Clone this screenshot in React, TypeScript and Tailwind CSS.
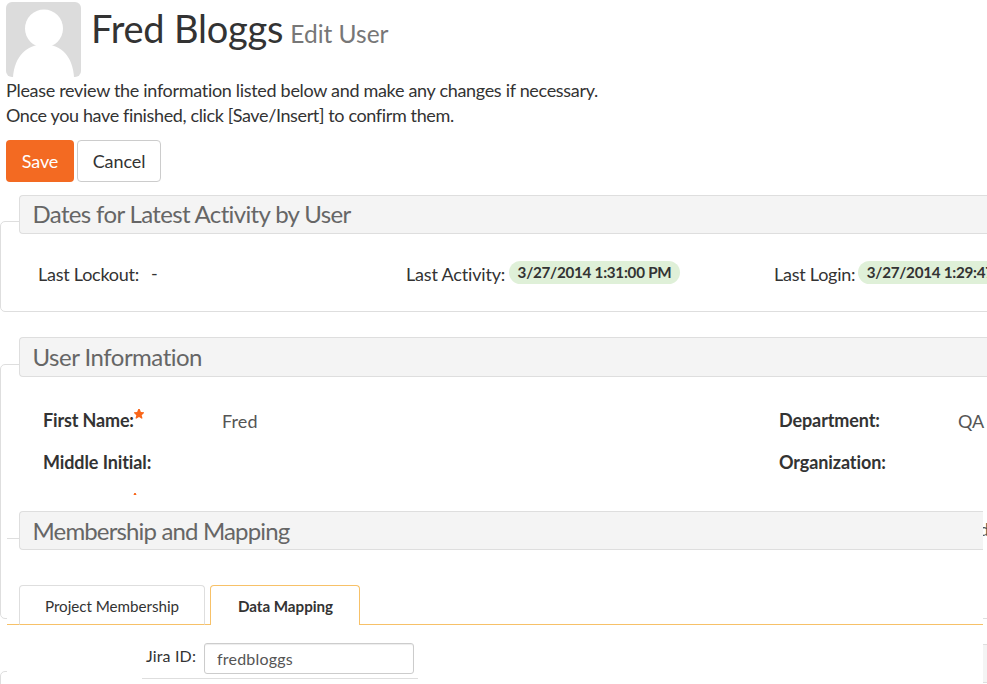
import React from "react";

function Star({ className = "" }: { className?: string }) {
  return (
    <svg viewBox="0 0 10 10" className={`h-[10px] w-[10px] shrink-0 ${className}`} fill="#f9661a">
      <path d="M4.300 0H5.700L6.900 2.900 10 3.200V4.100L7.700 6.200 8.500 9.300 7.800 9.800 5 8.100 2.200 9.800 1.500 9.300 2.300 6.200 0 4.100V3.200L3.100 2.900Z" />
    </svg>
  );
}

function Avatar() {
  return (
    <svg viewBox="0 0 75 75" className="h-[75px] w-[75px] shrink-0 rounded-[6px]">
      <rect width="75" height="75" fill="#dcdcdc" />
      <circle cx="38" cy="26.5" r="19" fill="#fff" />
      <path d="M7 75C8.500 55 20 42.500 38 42.500S66.500 55 68 75Z" fill="#fff" />
    </svg>
  );
}

function Legend({ children, className = "" }: { children?: React.ReactNode; className?: string }) {
  return (
    <h2 className={`rounded-l-[4px] border border-r-0 border-[#dedede] bg-[#f4f4f4] pl-[12.500px] text-[24px] whitespace-nowrap text-[#666] ${className}`}>
      {children}
    </h2>
  );
}

function Badge({ children, className = "" }: { children: React.ReactNode; className?: string }) {
  return (
    <span className={`mt-[-2px] h-[23px] rounded-full bg-[#dff0d8] px-[8.500px] text-[15.2px] leading-[22px] font-bold tracking-[-0.25px] ${className}`}>
      {children}
    </span>
  );
}

function Overlay() {
  return (
    <div className="absolute top-[495px] left-[7px] h-[189px] w-[976px] overflow-hidden bg-white pt-4">
      <div className="flex">
        <div className="mt-[27px] h-px w-3 bg-[#dedede]" />
        <Legend className="h-[39px] flex-1 leading-[38px] tracking-[-0.85px]">Membership and Mapping</Legend>
      </div>
      <div className="mt-[35px] flex h-10 text-[15.2px] leading-[40px] tracking-[-0.03px]">
        <div className="w-3 border-b border-[#f7c168]" />
        <div className="w-[186px] rounded-t-[4px] border border-[#dedede] border-b-[#f7c168] text-center">Project Membership</div>
        <div className="w-[5px] border-b border-[#f7c168]" />
        <div className="w-[150px] rounded-t-[4px] border border-b-0 border-[#f7c168] pl-px text-center font-bold">Data Mapping</div>
        <div className="flex-1 border-b border-[#f7c168]" />
      </div>
      <div className="mt-[18px] ml-[135px] flex h-9 w-[276px] border-b border-[#dedede] pl-1 text-[16px]">
        <label className="w-[58px] leading-[25px] tracking-[0.15px]">Jira ID:</label>
        <input
          defaultValue="fredbloggs"
          className="h-[31px] w-[210px] rounded-[3px] border border-[#ccc] bg-white px-3 tracking-[0.2px] text-[#555] shadow-[inset_0_1px_1px_rgba(0,0,0,0.075)] outline-none"
        />
      </div>
    </div>
  );
}

export default function App() {
  return (
    <div className="relative h-[684px] w-[987px] overflow-hidden bg-white font-['Lato',sans-serif] text-[18px] text-[#333]">
      <header className="flex h-[78px] pt-[2px] pl-[6px]">
        <Avatar />
        <h1 className="ml-[10px] text-[38px] leading-[52px] tracking-[-0.2px] whitespace-nowrap">
          Fred Bloggs<span className="ml-[7px] text-[24.500px] tracking-normal text-[#777]">Edit User</span>
        </h1>
      </header>
      <p className="pl-[6px] leading-[25px] whitespace-nowrap">
        <span className="tracking-[-0.31px]">Please review the information listed below and make any changes if necessary.</span>
        <br />
        <span className="tracking-[-0.37px]">Once you have finished, click [Save/Insert] to confirm them.</span>
      </p>
      <div className="mt-3 flex h-[42px] gap-[3px] pl-[6px]">
        <button className="w-[68px] rounded-[4px] bg-[#f36a22] tracking-[-0.1px] text-white">Save</button>
        <button className="w-[84px] rounded-[4px] border border-[#ccc] tracking-[-0.1px]">Cancel</button>
      </div>

      <section className="mt-[39px] h-[91px] w-[1100px] rounded-[5px] border border-[#dedede]">
        <Legend className="-mt-[27px] ml-[18px] h-[39px] leading-[36px] tracking-[-0.65px]">
          Dates for Latest Activity by User
        </Legend>
        <div className="mt-[29px] flex pl-[37px] leading-[22px] tracking-[-0.25px] whitespace-nowrap">
          <div className="flex w-[368px]">
            <span>Last Lockout:</span>
            <span className="-mt-px ml-3">-</span>
          </div>
          <div className="flex w-[368px]">
            <span className="tracking-[-0.18px]">Last Activity:</span>
            <Badge className="ml-[4px]">3/27/2014 1:31:00 PM</Badge>
          </div>
          <div className="flex">
            <span>Last Login:</span>
            <Badge className="ml-[3px]">3/27/2014 1:29:47 PM</Badge>
          </div>
        </div>
      </section>

      <section className="mt-[52px] h-[255px] w-[1100px] rounded-[5px] border border-[#dedede]">
        <Legend className="-mt-[28px] ml-[18px] h-[40px] leading-[37px] tracking-[-0.5px]">User Information</Legend>
        <div className="mt-[22px] grid h-[126px] grid-cols-[179px_557px_179px_1fr] grid-rows-[42px_42px_42px] pl-[42px] leading-[42px] font-bold tracking-[-0.1px]">
          <div className="flex">
            <span className="tracking-[-0.15px]">First Name:</span>
            <Star className="mt-[10px]" />
          </div>
          <div className="pt-px font-normal tracking-[0.1px] text-[#555]">Fred</div>
          <div>Department:</div>
          <div className="pt-px font-normal tracking-normal text-[#555]">QA</div>
          <div className="col-span-2">Middle Initial:</div>
          <div className="col-span-2">Organization:</div>
          <div>
            <Star className="mt-[9.500px] ml-[87px]" />
          </div>
          <div />
          <div />
          <div className="mt-[25px] pl-[21px] font-normal text-[#555]">d</div>
        </div>
      </section>

      <section className="mt-[52px] h-[91px] w-[1100px] rounded-[5px] border border-[#dedede]">
        <Legend className="-mt-[28px] ml-[18px] h-[39px]" />
      </section>

      <Overlay />
    </div>
  );
}
